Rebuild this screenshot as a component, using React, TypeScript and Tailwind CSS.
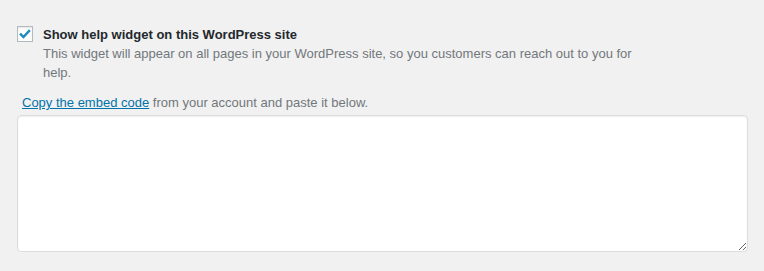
import { useState } from "react";

export default function App() {
  const [enabled, setEnabled] = useState(true);
  const [code, setCode] = useState("");

  return (
    <div className="min-h-[271px] w-full bg-[#f1f1f1] pl-[17px] pr-[16px] pt-[25px] font-['Liberation_Sans',Arial,sans-serif] text-[13px] leading-[19px]">
      {/* Enable toggle */}
      <label className="flex items-start gap-[10px] cursor-pointer">
        <span className="mt-[1px] flex h-[16px] w-[16px] shrink-0 items-center justify-center border border-[#b4b9be] bg-white shadow-[inset_0_1px_2px_rgba(0,0,0,0.1)]">
          <input
            type="checkbox"
            className="hidden"
            checked={enabled}
            onChange={(e) => setEnabled(e.target.checked)}
          />
          {enabled && (
            <svg viewBox="0 0 16 16" className="h-[14px] w-[14px]">
              <path
                d="M2.3 7.6 L6.2 11.4 L13.6 3.6"
                fill="none"
                stroke="#1e8cbe"
                strokeWidth="2.8"
              />
            </svg>
          )}
        </span>
        <div className="max-w-[620px]">
          <p className="font-bold text-[#23282d]">Show help widget on this WordPress site</p>
          <p className="text-[#72777c]">
            This widget will appear on all pages in your WordPress site, so you customers can
            reach out to you for help.
          </p>
        </div>
      </label>

      {/* Embed code */}
      <p className="mt-[11px] pl-[5px] text-[#72777c]">
        <a href="#" className="text-[#0073aa] underline">
          Copy the embed code
        </a>{" "}
        from your account and paste it below.
      </p>
      <textarea
        value={code}
        onChange={(e) => setCode(e.target.value)}
        className="mt-[3px] block h-[137px] w-[731px] rounded-[4px] border border-[#dddddd] bg-white p-2 text-[14px] text-[#32373c] shadow-[inset_0_1px_2px_rgba(0,0,0,0.07)] outline-none"
      />
    </div>
  );
}
